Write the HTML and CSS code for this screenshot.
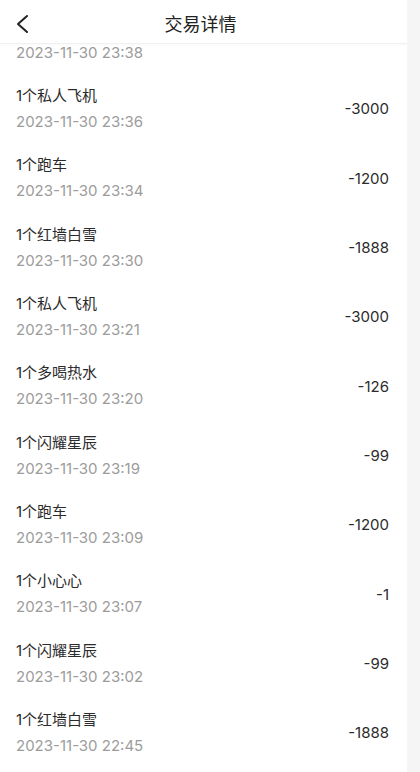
FILE: index.html
```html
<!DOCTYPE html>
<html lang="zh-CN">
<head>
    <meta charset="UTF-8">
    <meta name="viewport" content="width=device-width, initial-scale=1.0">
    <title>交易详情</title>
    <link rel="stylesheet" href="styles.css">
</head>
<body>
    <div class="pagina">
        <header class="topo">
            <span class="voltar">
                <svg width="16" height="20" viewBox="0 0 16 20">
                    <path d="M12 2 L3 10 L12 18" fill="none" stroke="#222" stroke-width="2" stroke-linecap="round" stroke-linejoin="round"/>
                </svg>
            </span>
            <h1 class="titulo">交易详情</h1>
        </header>

        <ul class="lista">
            <!-- linha cortada pela rolagem: só a data aparece -->
            <li class="item parcial"><p class="data">2023-11-30 23:38</p></li>
            <li class="item"><div class="info"><p class="nome">1个私人飞机</p><p class="data">2023-11-30 23:36</p></div><span class="valor">-3000</span></li>
            <li class="item"><div class="info"><p class="nome">1个跑车</p><p class="data">2023-11-30 23:34</p></div><span class="valor">-1200</span></li>
            <li class="item"><div class="info"><p class="nome">1个红墙白雪</p><p class="data">2023-11-30 23:30</p></div><span class="valor">-1888</span></li>
            <li class="item"><div class="info"><p class="nome">1个私人飞机</p><p class="data">2023-11-30 23:21</p></div><span class="valor">-3000</span></li>
            <li class="item"><div class="info"><p class="nome">1个多喝热水</p><p class="data">2023-11-30 23:20</p></div><span class="valor">-126</span></li>
            <li class="item"><div class="info"><p class="nome">1个闪耀星辰</p><p class="data">2023-11-30 23:19</p></div><span class="valor">-99</span></li>
            <li class="item"><div class="info"><p class="nome">1个跑车</p><p class="data">2023-11-30 23:09</p></div><span class="valor">-1200</span></li>
            <li class="item"><div class="info"><p class="nome">1个小心心</p><p class="data">2023-11-30 23:07</p></div><span class="valor">-1</span></li>
            <li class="item"><div class="info"><p class="nome">1个闪耀星辰</p><p class="data">2023-11-30 23:02</p></div><span class="valor">-99</span></li>
            <li class="item"><div class="info"><p class="nome">1个红墙白雪</p><p class="data">2023-11-30 22:45</p></div><span class="valor">-1888</span></li>
        </ul>
    </div>
</body>
</html>
```

FILE: styles.css
```css
* {
    margin: 0;
    padding: 0;
    box-sizing: border-box;
}

:root {
    --bg-color: #f5f5f5;
    --card-color: #ffffff;
    --text-color: #2b2b2b;
    --muted-color: #9c9c9c;
}

body {
    background: var(--bg-color);
    color: var(--text-color);
    font-family: "Inter", "Noto Sans CJK SC", sans-serif;
}

.pagina {
    width: 407px;
    height: 772px;
    background: var(--card-color);
    overflow: hidden;
}

.topo {
    height: 44px;
    display: flex;
    align-items: center;
    justify-content: center;
    position: relative;
    border-bottom: 1px solid #f1f1f1;
    box-shadow: 0 1px 2px rgba(0, 0, 0, 0.03);
}

.voltar {
    position: absolute;
    left: 15px;
    top: 14px;
    display: flex;
}

.titulo {
    font-family: "Noto Sans CJK SC", sans-serif;
    font-size: 18px;
    font-weight: 400;
    line-height: 24px;
    color: #222;
    margin-top: 3px;
    margin-left: -6px;
}

.lista {
    list-style: none;
}

.item {
    height: 69.33px;
    display: flex;
    align-items: center;
    justify-content: space-between;
    padding: 0 18px 0 16px;
}

.item.parcial {
    height: 30.33px;
    align-items: flex-start;
}

.item.parcial .data {
    line-height: 18px;
}

.info {
    display: flex;
    flex-direction: column;
    gap: 4px;
}

.nome {
    font-size: 15px;
    line-height: 22px;
    color: var(--text-color);
}

.data {
    font-size: 15px;
    line-height: 22px;
    color: var(--muted-color);
}

.valor {
    font-size: 15px;
    color: var(--text-color);
}
```
